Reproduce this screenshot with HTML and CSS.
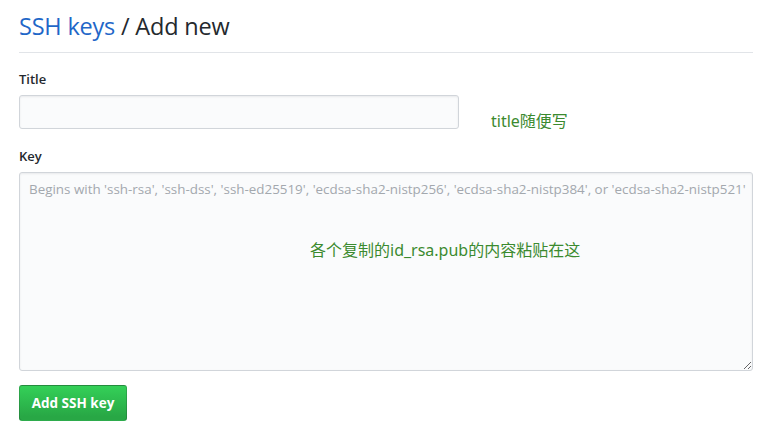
FILE: index.html
```html
<!DOCTYPE html>
<html>
<head>
<meta charset="utf-8">
<link rel="stylesheet" href="styles.css">
</head>
<body>
<div class="page">
  <div class="subhead">
    <h2 class="subhead-heading"><a href="#" class="crumb">SSH keys</a> / Add new</h2>
  </div>
  <form class="form">
    <div class="field">
      <label class="label">Title</label>
      <div class="title-row">
        <input class="input title-input" type="text">
        <span class="note note-title">title随便写</span>
      </div>
    </div>
    <div class="field field-key">
      <label class="label">Key</label>
      <div class="key-wrap">
        <textarea class="input key-input" placeholder="Begins with 'ssh-rsa', 'ssh-dss', 'ssh-ed25519', 'ecdsa-sha2-nistp256', 'ecdsa-sha2-nistp384', or 'ecdsa-sha2-nistp521'"></textarea>
        <span class="note note-key">各个复制的id_rsa.pub的内容粘贴在这</span>
      </div>
    </div>
    <button type="button" class="btn">Add SSH key</button>
  </form>
</div>
</body>
</html>
```
FILE: styles.css
```css
html, body {
  margin: 0;
  padding: 0;
  background: #fff;
}
body {
  font-family: "Open Sans", "Noto Sans", "Noto Sans CJK SC", sans-serif;
  color: #24292e;
}
.page {
  padding: 0 10px 0 19px;
}
.subhead {
  border-bottom: 1px solid #e1e4e8;
  padding-top: 10px;
  padding-bottom: 10px;
}
.subhead-heading {
  margin: 0;
  font-size: 23.5px;
  font-weight: 400;
  line-height: 32px;
  letter-spacing: -0.2px;
}
.crumb {
  color: #1f67c8;
  text-decoration: none;
}
.form {
  padding-top: 16px;
}
.field {
  margin-bottom: 17px;
}
.field-key {
  margin-bottom: 14px;
}
.label {
  display: block;
  font-size: 13px;
  font-weight: 600;
  line-height: 20px;
  margin-bottom: 6px;
}
.title-row {
  display: flex;
  align-items: flex-end;
}
.input {
  box-sizing: border-box;
  background: #fafbfc;
  border: 1px solid #d1d5da;
  border-radius: 3px;
  box-shadow: inset 0 1px 2px rgba(27,31,35,0.075);
  font-family: inherit;
  outline: none;
}
.title-input {
  width: 440px;
  height: 34px;
}
.note {
  color: #3b8a2f;
  font-family: "Noto Sans", "Noto Sans CJK SC", sans-serif;
  font-size: 16px;
}
.note-title {
  margin-left: 32px;
  line-height: 20px;
  margin-bottom: -2px;
}
.key-wrap {
  position: relative;
}
.key-input {
  display: block;
  width: 100%;
  height: 199px;
  resize: vertical;
  padding: 7px 1px 7px 9px;
  font-size: 13.4px;
  line-height: 18px;
}
.key-input::placeholder {
  color: #a3a8ae;
}
.note-key {
  position: absolute;
  left: 291px;
  top: 67px;
  line-height: 22px;
}
.btn {
  display: block;
  margin-top: 0;
  height: 36px;
  width: 108px;
  padding: 0;
  font-family: inherit;
  font-size: 13.5px;
  font-weight: 700;
  color: #fff;
  background: linear-gradient(-180deg, #34d058 0%, #28a745 90%);
  border: 1px solid rgba(27,31,35,0.2);
  border-radius: 3px;
}
```
